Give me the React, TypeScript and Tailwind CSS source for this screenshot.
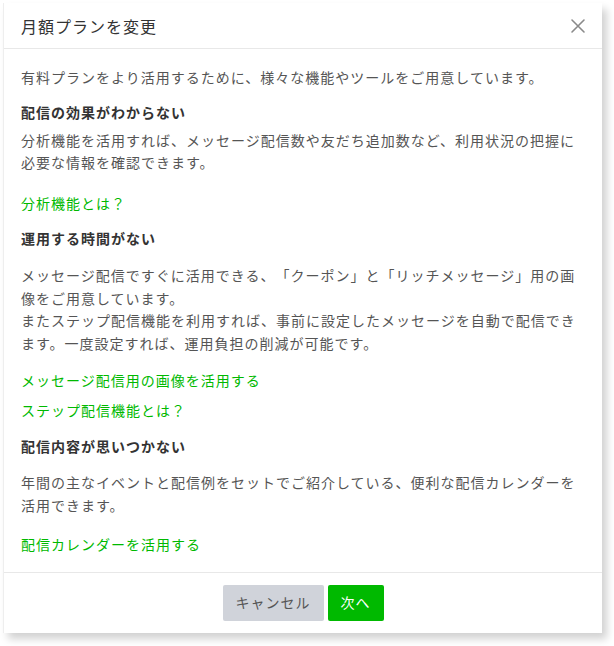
import React from "react";

const font = { fontFamily: '"Noto Sans CJK JP", "Noto Sans", sans-serif' };

const CloseIcon = () => (
  <svg width="16" height="16" viewBox="0 0 16 16" fill="none" stroke="#8a8a8a" strokeWidth="1.6" strokeLinecap="round">
    <path d="M2 2L14 14M14 2L2 14" />
  </svg>
);

export default function App() {
  return (
    <div className="min-h-screen bg-white pl-[3px] pt-[3px] [text-spacing-trim:space-all]" style={font}>
      <div className="w-[599px] bg-white border-l border-[#eeeeee] shadow-[5px_6px_8px_rgba(0,0,0,0.18)]">
        {/* Header */}
        <div className="flex h-[46px] items-center justify-between border-b border-[#e8e8e8] pl-[17px] pr-[12px]">
          <h2 className="text-[16px] tracking-[1px] text-[#333333]">月額プランを変更</h2>
          <button className="flex h-6 w-6 items-center justify-center">
            <CloseIcon />
          </button>
        </div>

        {/* Body */}
        <div className="px-[17px] pt-[17px] pb-[16px] text-[14px] leading-[22.4px] tracking-[1px] text-[#555555]">
          <p>有料プランをより活用するために、様々な機能やツールをご用意しています。</p>

          <h3 className="mt-[13px] font-bold text-[#333333]">配信の効果がわからない</h3>
          <p className="mt-[5px]">
            分析機能を活用すれば、メッセージ配信数や友だち追加数など、利用状況の把握に必要な情報を確認できます。
          </p>
          <a className="mt-[18px] block text-[#00b900]" href="#">分析機能とは？</a>

          <h3 className="mt-[13px] font-bold text-[#333333]">運用する時間がない</h3>
          <p className="mt-[15px]">
            メッセージ配信ですぐに活用できる、「クーポン」と「リッチメッセージ」用の画像をご用意しています。
            <br />
            またステップ配信機能を利用すれば、事前に設定したメッセージを自動で配信できます。一度設定すれば、運用負担の削減が可能です。
          </p>
          <a className="mt-[15px] block text-[#00b900]" href="#">メッセージ配信用の画像を活用する</a>
          <a className="mt-[8px] block text-[#00b900]" href="#">ステップ配信機能とは？</a>

          <h3 className="mt-[13px] font-bold text-[#333333]">配信内容が思いつかない</h3>
          <p className="mt-[14px]">
            年間の主なイベントと配信例をセットでご紹介している、便利な配信カレンダーを活用できます。
          </p>
          <a className="mt-[17px] block text-[#00b900]" href="#">配信カレンダーを活用する</a>
        </div>

        {/* Footer */}
        <div className="flex justify-center gap-[4px] border-t border-[#e8e8e8] pt-[12px] pb-[12px]">
          <button className="h-9 rounded-[2px] bg-[#d0d3da] px-[13px] text-[14px] tracking-[1px] text-[#555555]">
            キャンセル
          </button>
          <button className="h-9 rounded-[2px] bg-[#00b900] px-[13px] text-[14px] tracking-[1px] text-white">
            次へ
          </button>
        </div>
      </div>
    </div>
  );
}
